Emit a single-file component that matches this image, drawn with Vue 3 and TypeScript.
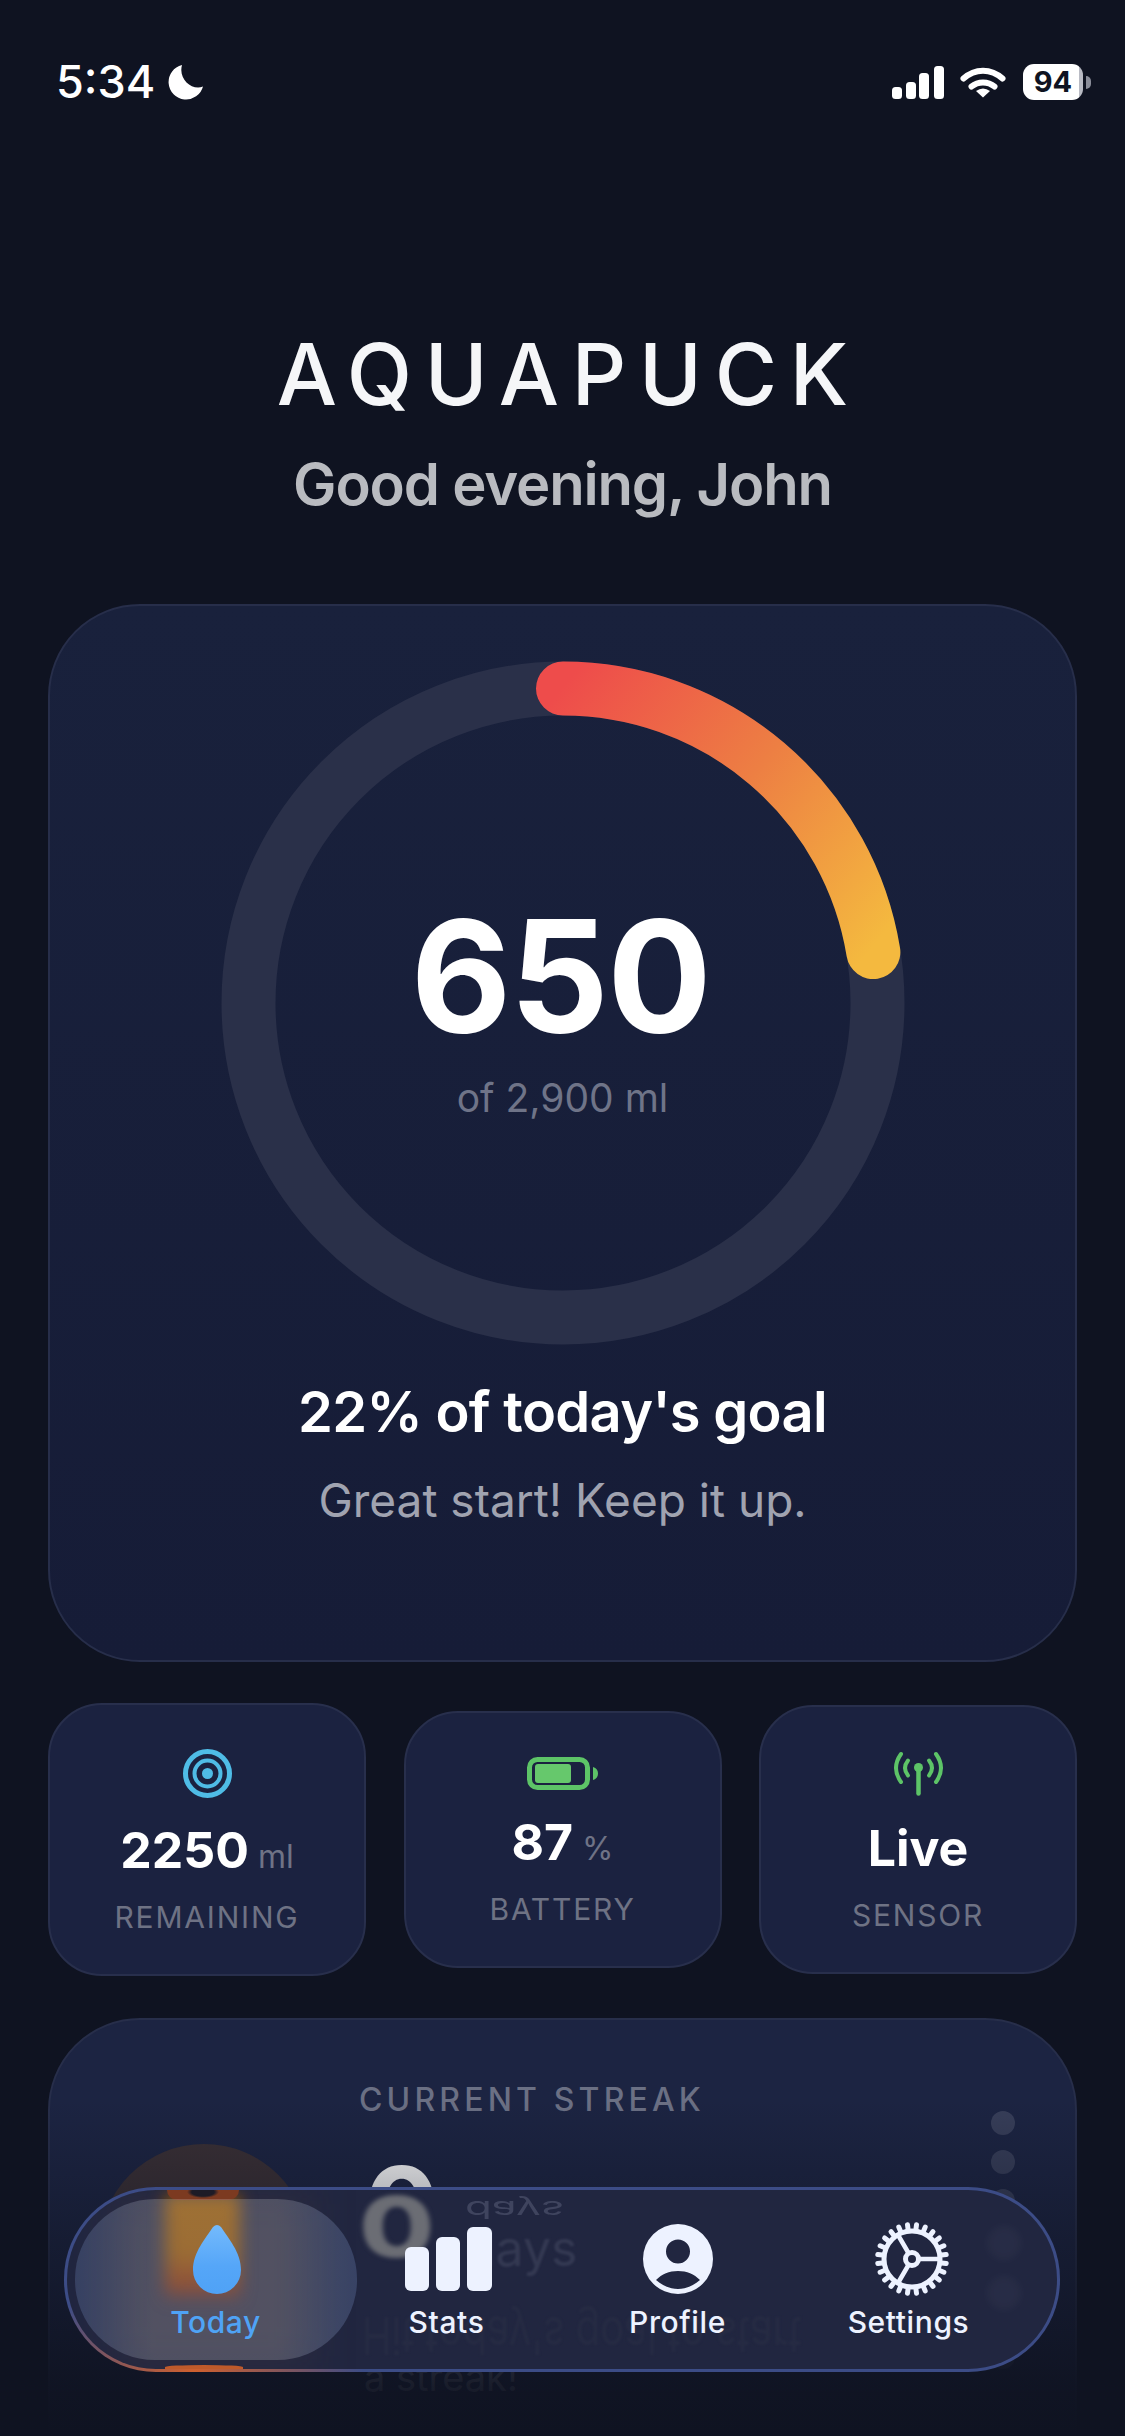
<script setup lang="ts">
defineOptions({ name: 'AquapuckToday' })

const consumed = 650
const goal = 2900
const radius = 314.5

// arc from 12 o'clock, clockwise, ends where today's intake sits on the ring
const angle = (consumed / goal) * Math.PI * 2
const progressPath = `M342 ${342 - radius}A${radius} ${radius} 0 0 1 ${342 + Math.sin(angle) * radius} ${342 - Math.cos(angle) * radius}`

const teeth = Array.from({ length: 24 }, (_, i) => {
  const a = (i / 24) * Math.PI * 2 + Math.PI / 24
  return {
    x1: 53 + Math.cos(a) * 30,
    y1: 37 + Math.sin(a) * 30,
    x2: 53 + Math.cos(a) * 34.5,
    y2: 37 + Math.sin(a) * 34.5,
  }
})

const weekDots = [0, 1, 2, 3, 4, 5, 6]
</script>

<template>
  <div class="screen">
    <div class="status-bar">
      <div class="status-left">
        <span class="time">5:34</span>
        <svg class="moon" width="35" height="36" viewBox="0 0 35 36">
          <path d="M14 1A17.5 17.5 0 1 0 35 22.5C24 27 10 15 14 1Z" fill="#fff" />
        </svg>
      </div>
      <div class="status-right">
        <svg width="52" height="33" viewBox="0 0 52 33" fill="#fff">
          <rect x="0" y="21" width="10" height="12" rx="3.5" />
          <rect x="14" y="16" width="10" height="17" rx="3.5" />
          <rect x="27" y="7" width="10" height="26" rx="3.5" />
          <rect x="42" y="0" width="10" height="33" rx="3.5" />
        </svg>
        <svg class="wifi" width="46" height="31" viewBox="0 0 46 31" fill="none">
          <path d="M3.5 11.5C15 1 31 1 42.5 11.5" stroke="#fff" stroke-width="6" stroke-linecap="round" />
          <path d="M11.5 19.5C18 14 28 14 34.5 19.5" stroke="#fff" stroke-width="6" stroke-linecap="round" />
          <path d="M23 30.5L16 24Q23 19 30 24Z" fill="#fff" />
        </svg>
        <div class="battery"><span>94</span></div>
        <div class="battery-tip"></div>
      </div>
    </div>

    <header class="header">
      <h1 class="brand">AQUAPUCK</h1>
      <p class="greeting">Good evening, John</p>
    </header>

    <section class="goal-card">
      <div class="ring-wrap">
        <svg class="ring" width="684" height="684" viewBox="0 0 684 684" fill="none">
          <defs>
            <linearGradient id="ringGrad" gradientUnits="userSpaceOnUse" x1="330" y1="40" x2="640" y2="300">
              <stop offset="0" stop-color="#ee4c4b" />
              <stop offset="0.5" stop-color="#ed7f43" />
              <stop offset="1" stop-color="#f4b93f" />
            </linearGradient>
          </defs>
          <circle cx="342" cy="342" :r="radius" stroke="#2a3049" stroke-width="54" />
          <path :d="progressPath" stroke="url(#ringGrad)" stroke-width="54" stroke-linecap="round" />
        </svg>
        <div class="ring-center">
          <span class="amount">650</span>
          <span class="amount-of">of 2,900 ml</span>
        </div>
      </div>
      <p class="goal-title">22% of today's goal</p>
      <p class="goal-sub">Great start! Keep it up.</p>
    </section>

    <section class="stats-row">
      <div class="stat-card">
        <svg width="49" height="49" viewBox="0 0 49 49" fill="none" stroke="#4fbce6">
          <circle cx="24.5" cy="24.5" r="22" stroke-width="5" />
          <circle cx="24.5" cy="24.5" r="13" stroke-width="4" />
          <circle cx="24.5" cy="24.5" r="5.5" fill="#4fbce6" stroke="none" />
        </svg>
        <div class="stat-value">2250<span class="stat-unit">ml</span></div>
        <div class="stat-label">Remaining</div>
      </div>
      <div class="stat-card">
        <svg width="71" height="33" viewBox="0 0 71 33" fill="none">
          <rect x="2.5" y="2.5" width="58" height="28" rx="8" stroke="#5dc467" stroke-width="5" />
          <rect x="8" y="7" width="36" height="19" rx="3" fill="#66c86c" />
          <path d="M66 10C69.5 11 71 13.5 71 16.5S69.5 22 66 23Z" fill="#5dc467" />
        </svg>
        <div class="stat-value">87<span class="stat-unit">%</span></div>
        <div class="stat-label">Battery</div>
      </div>
      <div class="stat-card">
        <svg width="51" height="45" viewBox="0 0 51 45" fill="none" stroke="#5dc467" stroke-linecap="round">
          <path d="M8 3Q-2 17 8 31" stroke-width="4" />
          <path d="M15 9.5Q9 17 15 24.5" stroke-width="4" />
          <path d="M43 3Q53 17 43 31" stroke-width="4" />
          <path d="M36 9.5Q42 17 36 24.5" stroke-width="4" />
          <path d="M25.5 17V42.5" stroke-width="4.5" />
          <circle cx="25.5" cy="16.5" r="4.5" fill="#5dc467" stroke="none" />
        </svg>
        <div class="stat-value">Live</div>
        <div class="stat-label">Sensor</div>
      </div>
    </section>

    <section class="streak-card">
      <div class="streak-main">
        <div class="streak-label">CURRENT STREAK</div>
        <div class="streak-row">
          <div class="flame-circle"></div>
          <div class="streak-text">
            <div class="streak-count">
              <span class="streak-num">0</span>
              <span class="streak-days">days</span>
            </div>
            <p class="streak-hint">Hit today's goal to start a streak!</p>
          </div>
        </div>
      </div>
      <div class="week-dots">
        <span v-for="d in weekDots" :key="d" class="week-dot"></span>
      </div>
    </section>

    <div class="bottom-fade"></div>

    <nav class="tabbar">
      <!-- what the glass bends from the streak card underneath -->
      <div class="refract" aria-hidden="true">
        <div class="r-glow"></div>
        <div class="r-flame"></div>
        <div class="r-flame-top"></div>
        <div class="r-flame-bottom"></div>
        <span class="r-zero">0</span>
        <span class="r-days-flip">days</span>
        <span class="r-days">days</span>
        <span class="r-hint">Hit today's goal to start</span>
        <span class="r-dot r-dot-a"></span>
        <span class="r-dot r-dot-b"></span>
      </div>
      <div class="tab-pill"></div>
      <div class="tab tab-active">
        <svg width="100" height="74" viewBox="0 0 100 74">
          <defs>
            <linearGradient id="dropGrad" x1="0" y1="0" x2="0" y2="1">
              <stop offset="0" stop-color="#74bafc" />
              <stop offset="0.6" stop-color="#55a6f8" />
              <stop offset="1" stop-color="#4fa2f6" />
            </linearGradient>
          </defs>
          <path d="M47 5Q51 1 55 5C62 16 75 30 75 48A24 24 0 0 1 27 48C27 30 40 16 47 5Z" fill="url(#dropGrad)" />
        </svg>
        <span class="tab-label">Today</span>
      </div>
      <div class="tab">
        <svg width="100" height="74" viewBox="0 0 100 74" fill="#edf2ff">
          <rect x="8" y="25" width="24" height="44" rx="6" />
          <rect x="39" y="15" width="24" height="54" rx="6" />
          <rect x="70" y="5" width="25" height="64" rx="6" />
        </svg>
        <span class="tab-label">Stats</span>
      </div>
      <div class="tab">
        <svg width="100" height="74" viewBox="0 0 100 74" fill="#edf2ff">
          <path
            fill-rule="evenodd"
            d="M50 2A35 35 0 1 1 50 72A35 35 0 1 1 50 2ZM50 17.5A12 12 0 1 0 50 41.5A12 12 0 1 0 50 17.5ZM28 58C42 70 58 70 72 58C66 52 59 49 50 49C41 49 34 52 28 58Z"
          />
        </svg>
        <span class="tab-label">Profile</span>
      </div>
      <div class="tab">
        <svg width="100" height="74" viewBox="0 0 100 74" fill="none" stroke="#edf2ff">
          <circle cx="53" cy="37" r="28" stroke-width="5" />
          <line
            v-for="(t, i) in teeth"
            :key="i"
            :x1="t.x1"
            :y1="t.y1"
            :x2="t.x2"
            :y2="t.y2"
            stroke-width="5"
            stroke-linecap="round"
          />
          <circle cx="53" cy="37" r="6.5" stroke-width="5" />
          <path d="M60 37H81M49.5 43L39 61M49.5 31L39 13" stroke-width="4.5" />
        </svg>
        <span class="tab-label">Settings</span>
      </div>
    </nav>
  </div>
</template>

<style>
html,
body {
  background: #0f1321;
}
</style>

<style scoped>
.screen {
  position: relative;
  width: 1125px;
  height: 2436px;
  overflow: hidden;
  background: #0f1321;
  font-family: Inter, 'Liberation Sans', sans-serif;
  color: #fff;
}

.status-bar {
  display: flex;
  justify-content: space-between;
  align-items: center;
  height: 36px;
  padding: 64px 34px 0 56px;
}

.status-left,
.status-right {
  display: flex;
  align-items: center;
}

.time {
  font-size: 45px;
  font-weight: 500;
  line-height: 36px;
}

.moon {
  margin-left: 13px;
}

.wifi {
  margin-left: 16px;
}

.battery {
  display: flex;
  align-items: center;
  justify-content: center;
  width: 60px;
  height: 36px;
  margin-left: 17px;
  border-radius: 11px;
  background: linear-gradient(90deg, #fff 94%, #b9bbc4 94%);
  color: #0f1321;
  font-size: 29px;
  font-weight: 700;
  line-height: 36px;
}

.battery-tip {
  width: 5px;
  height: 13px;
  margin-left: 3px;
  border-radius: 0 7px 7px 0;
  background: #8a8d99;
}

.header {
  padding-top: 225px;
  text-align: center;
}

.brand {
  margin: 0;
  font-size: 85px;
  font-weight: 550;
  line-height: 100px;
  letter-spacing: 0.15em;
  text-indent: 0.15em;
  color: #f5f6f8;
}

.greeting {
  margin: 24px 0 0;
  font-size: 58px;
  font-weight: 600;
  line-height: 70px;
  letter-spacing: -0.02em;
  color: #b9bbc0;
}

.goal-card {
  box-sizing: border-box;
  height: 1058px;
  margin: 85px 48px 0;
  padding-top: 55px;
  border: 2px solid #272e4a;
  border-radius: 92px;
  background: linear-gradient(180deg, #19213c 0%, #161c37 100%);
  text-align: center;
}

.ring-wrap {
  position: relative;
  width: 684px;
  height: 684px;
  margin: 0 auto;
}

.ring {
  display: block;
}

.ring-center {
  position: absolute;
  inset: 0;
  display: flex;
  flex-direction: column;
  align-items: center;
  justify-content: center;
}

.amount {
  margin: 12px 0 0 -4px;
  font-size: 155px;
  font-weight: 700;
  line-height: 160px;
  letter-spacing: -0.01em;
}

.amount-of {
  margin-top: 17px;
  font-size: 39px;
  line-height: 50px;
  color: #6f7488;
}

.goal-title {
  margin: 34px 0 0;
  font-size: 56px;
  font-weight: 600;
  line-height: 66px;
  letter-spacing: -0.012em;
}

.goal-sub {
  margin: 25px 0 0;
  font-size: 46px;
  line-height: 60px;
  color: #a0a3b0;
}

.stats-row {
  display: flex;
  align-items: center;
  justify-content: space-between;
  height: 273px;
  margin: 41px 48px 0;
}

.stat-card {
  box-sizing: border-box;
  display: flex;
  flex-direction: column;
  align-items: center;
  width: 318px;
  padding: 44px 0 39px;
  border: 2px solid #282f4c;
  border-radius: 54px;
  background: #1b2240;
}

.stat-value {
  margin-top: 22px;
  font-size: 50px;
  font-weight: 700;
  line-height: 60px;
}

.stat-unit {
  margin-left: 9px;
  font-size: 32px;
  font-weight: 400;
  line-height: 1;
  color: #6f7386;
}

.stat-label {
  margin-top: 19px;
  font-size: 30px;
  line-height: 36px;
  letter-spacing: 0.06em;
  text-transform: uppercase;
  color: #6e7284;
}

.streak-card {
  box-sizing: border-box;
  display: flex;
  gap: 26px;
  height: 620px;
  margin: 42px 48px 0;
  padding: 62px 60px 0 49px;
  border: 2px solid #272e4a;
  border-radius: 92px;
  background: #1c2442;
}

.streak-main {
  flex: 1;
}

.streak-label {
  font-size: 32px;
  font-weight: 500;
  line-height: 36px;
  letter-spacing: 0.13em;
  text-align: center;
  color: #6b7084;
}

.streak-row {
  display: flex;
  gap: 55px;
  margin-top: 26px;
}

.flame-circle {
  flex-shrink: 0;
  width: 210px;
  height: 210px;
  border-radius: 50%;
  background: #3a3035;
}

.streak-text {
  padding-top: 7px;
}

.streak-count {
  display: flex;
  align-items: baseline;
  gap: 18px;
}

.streak-num {
  font-size: 112px;
  font-weight: 700;
  line-height: 112px;
}

.streak-days {
  font-size: 44px;
  color: #9a9dab;
}

.streak-hint {
  max-width: 440px;
  margin: 42px 0 0;
  font-size: 38px;
  line-height: 48px;
  color: #9a9dab;
}

.week-dots {
  display: flex;
  flex-direction: column;
  gap: 15px;
  margin-top: 29px;
}

.week-dot {
  width: 24px;
  height: 24px;
  border-radius: 50%;
  background: rgba(255, 255, 255, 0.12);
}

.bottom-fade {
  position: absolute;
  left: 0;
  right: 0;
  bottom: 0;
  height: 336px;
  background: linear-gradient(180deg, rgba(15, 19, 33, 0) 0%, rgba(15, 19, 33, 0.93) 85%, #0f1321 100%);
}

.tabbar {
  position: absolute;
  left: 64px;
  bottom: 64px;
  box-sizing: border-box;
  display: flex;
  width: 996px;
  height: 185px;
  padding: 32px 33px 0;
  border: 3px solid transparent;
  border-radius: 92px;
  background:
    linear-gradient(#212640, #212640) padding-box,
    radial-gradient(170px 100px at 130px 100%, #d0602e, rgba(208, 96, 46, 0) 100%) border-box,
    #3c4c86 border-box;
}

.refract {
  position: absolute;
  inset: 0;
  overflow: hidden;
  border-radius: 89px;
}

.refract > * {
  position: absolute;
}

.r-glow {
  left: 45px;
  top: 0;
  width: 200px;
  height: 180px;
  background: rgba(110, 75, 55, 0.14);
  filter: blur(22px);
}

.r-flame {
  left: 98px;
  top: 4px;
  width: 75px;
  height: 108px;
  background: linear-gradient(180deg, #8a5208 0%, #854c08 55%, #74290f 86%, rgba(116, 41, 15, 0) 100%);
  filter: blur(8px);
}

.r-flame-top {
  left: 100px;
  top: 0;
  width: 72px;
  height: 10px;
  border-radius: 0 0 20px 20px;
  background: radial-gradient(16px 6px at 50% 20%, #1d1b26 70%, rgba(29, 27, 38, 0) 100%), #7c3a20;
}

.r-flame-bottom {
  left: 98px;
  bottom: 0;
  width: 78px;
  height: 4px;
  border-radius: 50% 50% 0 0;
  background: #bf5a2b;
}

.r-zero {
  left: 292px;
  top: 0;
  font-size: 84px;
  font-weight: 800;
  line-height: 74px;
  color: #6b6d74;
  transform: scaleX(1.3);
  transform-origin: left top;
  filter: blur(2px);
}

.r-days-flip {
  left: 398px;
  top: 0;
  font-size: 44px;
  line-height: 40px;
  color: #3f445e;
  transform: scaleY(-0.55);
  filter: blur(0.6px);
}

.r-days {
  left: 398px;
  top: 28px;
  font-size: 50px;
  line-height: 60px;
  color: #343952;
  filter: blur(1px);
}

.r-hint {
  left: 295px;
  top: 122px;
  font-size: 40px;
  line-height: 46px;
  color: #262b43;
  white-space: nowrap;
  transform: scaleY(-1.3);
  filter: blur(1px);
}

.r-dot {
  width: 34px;
  height: 34px;
  border-radius: 50%;
  background: rgba(255, 255, 255, 0.03);
  filter: blur(4px);
}

.r-dot-a {
  left: 920px;
  top: 36px;
}

.r-dot-b {
  left: 920px;
  top: 86px;
}

.tab-pill {
  position: absolute;
  left: 8px;
  top: 9px;
  width: 282px;
  height: 161px;
  border-radius: 80px;
  background: linear-gradient(90deg, rgba(130, 160, 220, 0.22) 0%, rgba(255, 255, 255, 0.18) 28%, rgba(255, 255, 255, 0.18) 72%, rgba(130, 160, 220, 0.24) 100%);
}

.tab {
  position: relative;
  display: flex;
  flex: 1;
  flex-direction: column;
  align-items: center;
}

.tab svg {
  display: block;
}

.tab-label {
  margin-top: 8px;
  font-size: 30px;
  font-weight: 500;
  line-height: 36px;
  letter-spacing: 0.02em;
  color: #edf2ff;
}

.tab-active .tab-label {
  color: #4fa3f6;
}
</style>
